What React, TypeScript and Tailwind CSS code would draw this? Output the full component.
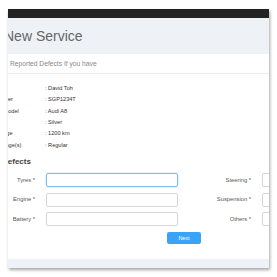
import React from 'react';

const details = [
  { label: 'Name', value: 'David Toh' },
  { label: 'Number', value: 'SGP1234T' },
  { label: 'Car Model', value: 'Audi A8' },
  { label: 'Color', value: 'Silver' },
  { label: 'Mileage', value: '1200 km' },
  { label: 'Package(s)', value: 'Regular' },
];

const defectRows = [
  ['Tyres', 'Steering'],
  ['Engine', 'Suspension'],
  ['Battery', 'Others'],
];

function Field({ label, focused }: { label: string; focused?: boolean }) {
  return (
    <>
      <label className="w-[42px] shrink-0 pr-[3px] text-right text-[5.8px] text-[#555]">
        {label} *
      </label>
      <input
        className={
          'ml-[8px] h-[14px] w-[132px] shrink-0 rounded-[2px] border bg-white outline-none ' +
          (focused
            ? 'border-[#7dbdf2] shadow-[0_0_2px_rgba(90,170,240,0.5)]'
            : 'border-[#d6d6d6]')
        }
      />
    </>
  );
}

export default function App() {
  return (
    <div className="h-[277px] w-[277px] bg-white pl-[8px] pt-[9px] font-['Liberation_Sans',Arial,sans-serif]">
      <div className="flex h-[259px] w-[261px] flex-col overflow-hidden bg-white shadow-[1px_2px_3px_rgba(0,0,0,0.35)]">
        {/* top bar */}
        <div className="h-[9px] shrink-0 bg-[#232323]" />

        {/* header */}
        <div className="flex h-[36px] shrink-0 items-center bg-[#eef2f6]">
          <h1 className="ml-[-4px] whitespace-nowrap text-[14px] font-light text-[#666]">
            New Service
          </h1>
        </div>

        {/* body */}
        <div className="flex flex-1 flex-col">
          <div className="border-b border-[#ebebeb] pb-[4.5px] pl-[2px] pt-[6px] text-[6.7px] leading-[8px] text-[#888]">
            Reported Defects If you have
          </div>

          <div className="ml-[-15px] mt-[9px]">
            {details.map((d) => (
              <div key={d.label} className="flex h-[11.35px] items-center text-[5.6px] text-[#333]">
                <span className="w-[52px] shrink-0 whitespace-nowrap">{d.label}</span>
                <span className="whitespace-nowrap">: {d.value}</span>
              </div>
            ))}
          </div>

          <div className="ml-[-6px] mt-[6.5px] text-[8px] font-bold leading-[10px] text-[#444]">
            Defects
          </div>

          <div className="ml-[-12px] mt-[6px] flex flex-col gap-[5.5px]">
            {defectRows.map(([left, right], i) => (
              <div key={left} className="flex w-max items-center">
                <Field label={left} focused={i === 0} />
                <div className="w-[34px] shrink-0" />
                <Field label={right} />
              </div>
            ))}
          </div>

          <div className="mt-[6px] pl-[159px]">
            <button className="flex h-[12px] w-[34px] items-center justify-center rounded-[2px] bg-[#38a3f7] text-[5.4px] text-white">
              Next
            </button>
          </div>

          {/* footer strip */}
          <div className="mt-auto h-[9px] shrink-0 bg-[#eef2f6]" />
        </div>
      </div>
    </div>
  );
}
